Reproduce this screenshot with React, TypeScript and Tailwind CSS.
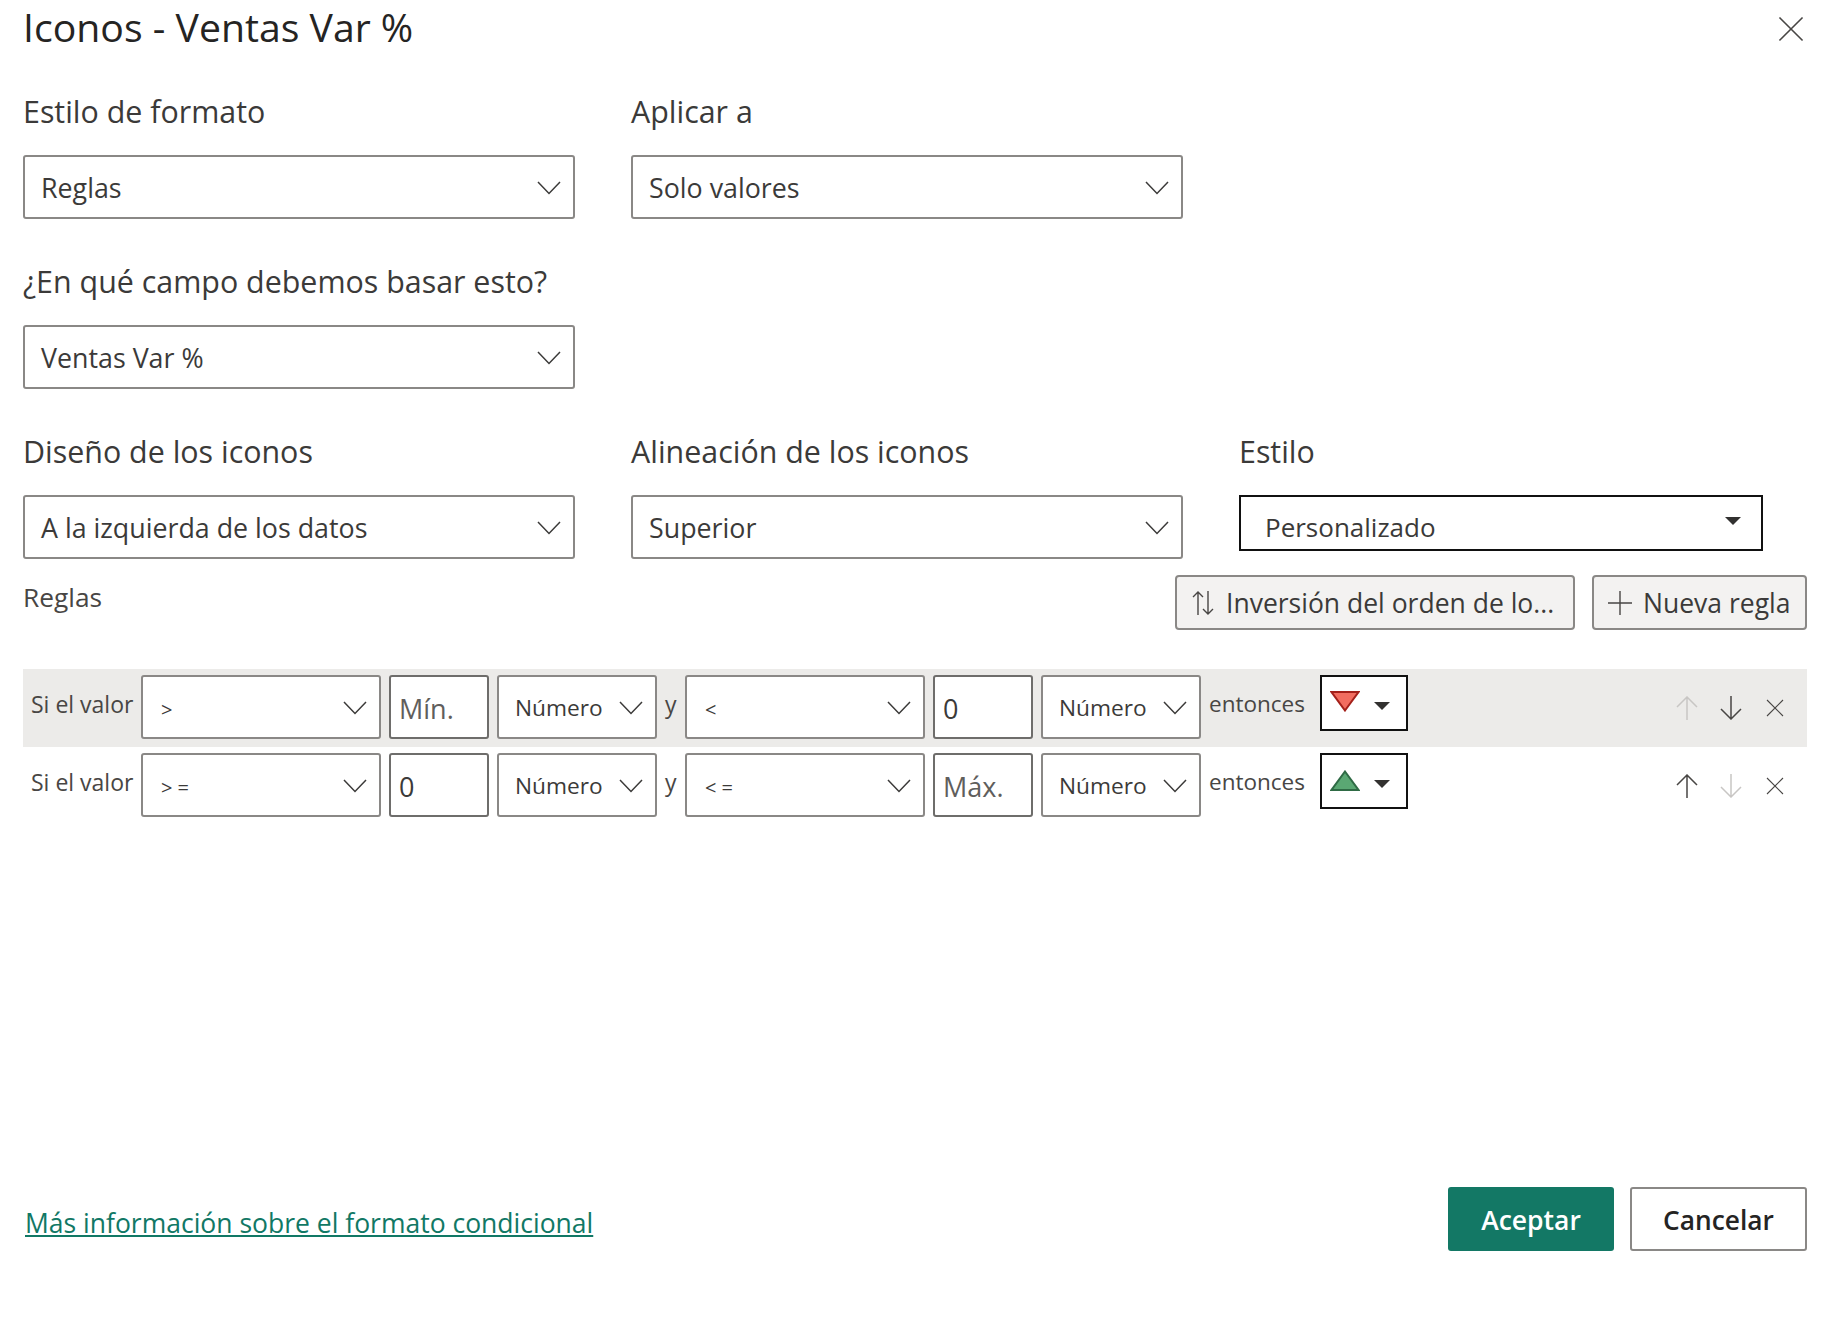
import React from "react";

const Chevron = () => (
  <svg width="24" height="14" viewBox="0 0 24 14" fill="none" stroke="#3b3a39" strokeWidth="1.5" className="shrink-0 mt-[2px]">
    <polyline points="1,1 12,12.5 23,1" />
  </svg>
);

const Caret = ({ className }: { className: string }) => (
  <svg width="16" height="8" viewBox="0 0 16 8" className={className}>
    <polygon points="0,0 16,0 8,8" fill="#323130" />
  </svg>
);

const Cross = ({ size, color }: { size: number; color: string }) => (
  <svg width={size} height={size} viewBox="0 0 18 18" fill="none" stroke={color} strokeWidth="1.1" className="shrink-0">
    <path d="M1 1 L17 17 M17 1 L1 17" />
  </svg>
);

const Arrow = ({ up, color }: { up: boolean; color: string }) => (
  <svg width="22" height="24" viewBox="0 0 22 24" fill="none" stroke={color} strokeWidth="1.5" className="shrink-0">
    {up ? <path d="M11 24 V1 M1 11 L11 1 L21 11" /> : <path d="M11 0 V23 M1 13 L11 23 L21 13" />}
  </svg>
);

const Select = ({ label }: { label: string }) => (
  <div className="w-[552px] h-[64px] bg-white border-2 border-[#8a8886] rounded-[3px] flex items-center justify-between pl-[16px] pr-[12px] text-[26.8px] text-[#3b3a39]">
    <span className="mt-[2px]">{label}</span>
    <Chevron />
  </div>
);

const Field = ({ title, value }: { title: string; value: string }) => (
  <div className="w-[552px]">
    <div className="text-[30.4px] text-[#3b3a39] h-[63px] leading-[40px]">{title}</div>
    <Select label={value} />
  </div>
);

const Small = ({ label, w, op }: { label: string; w: string; op?: boolean }) => (
  <div className={`h-[64px] bg-white border-2 border-[#8a8886] rounded-[3px] flex items-center justify-between pr-[12px] text-[#3b3a39] shrink-0 ${w} ${op ? "pl-[18px] text-[20px] tracking-[5px]" : "pl-[16px] text-[22.7px]"}`}>
    <span className={op ? "mt-[6px]" : "mt-[3px]"}>{label}</span>
    <Chevron />
  </div>
);

const Input = ({ value, hint }: { value: string; hint?: boolean }) => (
  <div className={`w-[100px] h-[64px] bg-white border-2 border-[#6e6d6b] rounded-[3px] flex items-center pl-[8px] pt-[4px] text-[27px] shrink-0 ${hint ? "text-[#605e5c]" : "text-[#3b3a39]"}`}>
    {value}
  </div>
);

const Rule = ({ a, b, c, d, up, gray }: { a: string; b: string; c: string; d: string; up: boolean; gray: boolean }) => (
  <div className={`h-[78px] flex items-start gap-[8px] pl-[8px] pt-[6px] ${gray ? "bg-[#ecebe9]" : "bg-white"}`}>
    <span className="text-[23px] text-[#484644] whitespace-nowrap w-[102px] leading-[58px]">Si el valor</span>
    <Small label={a} w="w-[240px]" op />
    <Input value={b} hint={b !== "0"} />
    <Small label="Número" w="w-[160px]" />
    <span className="text-[23px] text-[#484644] w-[12px] leading-[58px]">y</span>
    <Small label={c} w="w-[240px]" op />
    <Input value={d} hint={d !== "0"} />
    <Small label="Número" w="w-[160px]" />
    <span className="text-[22.5px] text-[#484644] w-[103px] leading-[58px]">entonces</span>
    <div className="w-[88px] h-[56px] bg-white border-2 border-[#111] flex items-start gap-[14px] pl-[8px] shrink-0">
      <svg width="30" height="21" viewBox="0 0 30 21" className={up ? "mt-[15px]" : "mt-[14px]"}>
        {up ? (
          <polygon points="15,1.5 28.5,20 1.5,20" fill="#5aa873" stroke="#2f6b45" strokeWidth="2" />
        ) : (
          <polygon points="15,19.5 28.5,1 1.5,1" fill="#f26d60" stroke="#a4201a" strokeWidth="2" />
        )}
      </svg>
      <Caret className="mt-[25px]" />
    </div>
    <div className="ml-auto flex items-center pt-[21px] pr-[23px]">
      <Arrow up color={up ? "#484644" : "#c8c6c4"} />
      <div className="w-[22px]" />
      <Arrow up={false} color={up ? "#c8c6c4" : "#484644"} />
      <div className="w-[24px]" />
      <Cross size={18} color="#484644" />
    </div>
  </div>
);

export default function App() {
  return (
    <div className="w-[1843px] h-[1329px] bg-white font-['Open_Sans','Noto_Sans',sans-serif] pl-[23px] pr-[36px] overflow-hidden">
      <div className="flex justify-between items-start pt-[3px] h-[92px]">
        <h1 className="text-[39.2px] text-[#252423] font-medium leading-[48px]">Iconos - Ventas Var %</h1>
        <div className="mt-[13px] mr-[3px]">
          <Cross size={26} color="#484644" />
        </div>
      </div>
      <div className="flex gap-[56px]">
        <Field title="Estilo de formato" value="Reglas" />
        <Field title="Aplicar a" value="Solo valores" />
      </div>
      <div className="mt-[43px]">
        <Field title="¿En qué campo debemos basar esto?" value="Ventas Var %" />
      </div>
      <div className="flex gap-[56px] mt-[43px]">
        <Field title="Diseño de los iconos" value="A la izquierda de los datos" />
        <Field title="Alineación de los iconos" value="Superior" />
        <div className="w-[524px]">
          <div className="text-[30.4px] text-[#3b3a39] h-[63px] leading-[40px]">Estilo</div>
          <div className="h-[56px] border-2 border-[#111] flex items-start justify-between pl-[24px] pr-[20px] text-[26px] text-[#3b3a39]">
            <span className="leading-[60px]">Personalizado</span>
            <Caret className="mt-[20px]" />
          </div>
        </div>
      </div>
      <div className="flex justify-between mt-[16px]">
        <span className="text-[26.3px] text-[#484644] leading-[44px]">Reglas</span>
        <div className="flex gap-[17px]">
          <div className="w-[400px] h-[55px] bg-[#f3f2f1] border-2 border-[#8a8886] rounded-[4px] flex items-center pl-[15px] text-[26.5px] text-[#3b3a39]">
            <svg width="22" height="24" viewBox="0 0 22 24" fill="none" stroke="#484644" strokeWidth="1.4" className="shrink-0 mr-[12px]">
              <path d="M6 24 V1 M1 6 L6 1 L11 6 M16 0 V23 M11 18 L16 23 L21 18" />
            </svg>
            <span className="mt-[3px]">Inversión del orden de lo...</span>
          </div>
          <div className="w-[215px] h-[55px] bg-[#f3f2f1] border-2 border-[#8a8886] rounded-[4px] flex items-center pl-[14px] text-[26.5px] text-[#3b3a39]">
            <svg width="24" height="24" viewBox="0 0 24 24" fill="none" stroke="#484644" strokeWidth="1.4" className="shrink-0 mr-[11px]">
              <path d="M12 0 V24 M0 12 H24" />
            </svg>
            <span className="mt-[3px]">Nueva regla</span>
          </div>
        </div>
      </div>
      <div className="mt-[39px]">
        <Rule a=">" b="Mín." c="<" d="0" up={false} gray />
        <Rule a=">=" b="0" c="<=" d="Máx." up gray={false} />
      </div>
      <div className="mt-[362px] pl-[2px] flex justify-between items-center">
        <span className="text-[26.5px] text-[#117865] underline mt-[10px]">Más información sobre el formato condicional</span>
        <div className="flex gap-[16px]">
          <div className="w-[166px] h-[64px] bg-[#137865] rounded-[3px] text-white font-semibold text-[26.5px] pt-[3px] flex items-center justify-center">Aceptar</div>
          <div className="w-[177px] h-[64px] border-2 border-[#8a8886] rounded-[3px] text-[#252423] font-semibold text-[26.3px] pt-[3px] flex items-center justify-center">Cancelar</div>
        </div>
      </div>
    </div>
  );
}
